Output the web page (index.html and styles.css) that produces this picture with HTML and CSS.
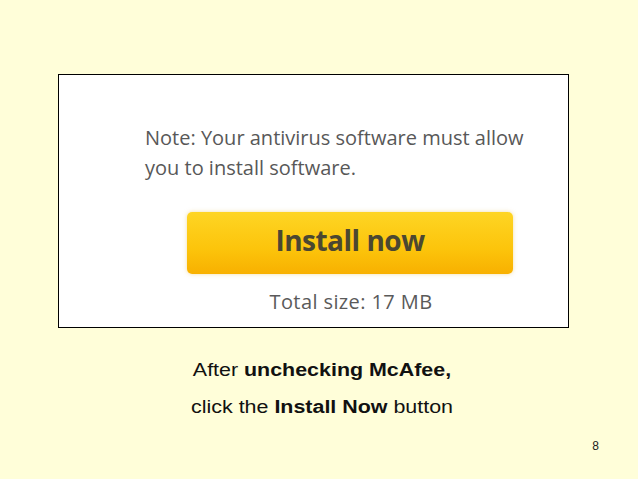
FILE: index.html
```html
<!DOCTYPE html>
<html lang="en">
<head>
    <meta charset="UTF-8">
    <meta name="viewport" content="width=device-width, initial-scale=1.0">
    <title>Install now</title>
    <link rel="stylesheet" href="styles.css">
</head>
<body>
    <div class="slide">
        <div class="shot">
            <p class="note">Note: Your antivirus software must allow<br>you to install software.</p>
            <div class="install-btn">Install now</div>
            <p class="size">Total size: 17 MB</p>
        </div>

        <div class="caption">
            <p>After <b>unchecking McAfee,</b></p>
            <p>click the <b>Install Now</b> button</p>
        </div>

        <div class="page-num">8</div>
    </div>
</body>
</html>
```

FILE: styles.css
```css
body {
    margin: 0;
    background-color: #fffed9;
    font-family: "Liberation Sans", Arial, sans-serif;
}

.slide {
    width: 638px;
    height: 479px;
    display: flex;
    flex-direction: column;
}

.shot {
    margin: 74px 0 0 58px;
    width: 509px;
    height: 252px;
    border: 1px solid #000;
    background: #fff;
    display: flex;
    flex-direction: column;
    font-family: "Open Sans", sans-serif;
}

.note {
    margin: 48px 0 0 86px;
    font-size: 20px;
    line-height: 30px;
    color: #585858;
}

.install-btn {
    margin: 29px 0 0 128px;
    width: 326px;
    height: 62px;
    padding-bottom: 6px;
    box-sizing: border-box;
    border-radius: 5px;
    background: linear-gradient(#fed524, #fcc40b 60%, #f8b000);
    box-shadow: 0 0 4px rgba(230, 190, 80, 0.5);
    display: flex;
    align-items: center;
    justify-content: center;
    font-size: 28px;
    font-weight: bold;
    color: #4b4731;
    letter-spacing: -0.5px;
}

.size {
    margin: 16px 0 0 0;
    padding-left: 116px;
    text-align: center;
    width: 352px;
    font-size: 20px;
    line-height: 24px;
    color: #5a5a5a;
    letter-spacing: 0.4px;
}

.caption {
    margin: 31px 0 0 172px;
    width: 300px;
    text-align: center;
    font-size: 18px;
    color: #111;
    transform: scaleX(1.19);
}

.caption p {
    margin: 0 0 15px 0;
    line-height: 22px;
}

.caption p:last-child {
    margin-bottom: 0;
}

.page-num {
    align-self: flex-end;
    margin: 21px 39px 0 0;
    font-size: 12px;
    color: #222;
}
```
